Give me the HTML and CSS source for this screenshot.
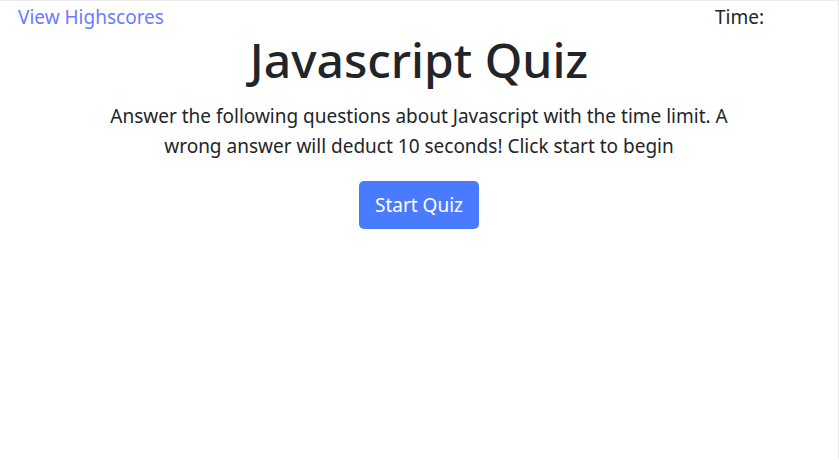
FILE: index.html
```html
<!DOCTYPE html>
<html lang="en">
<head>
<meta charset="utf-8">
<title>Javascript Quiz</title>
<link rel="stylesheet" href="styles.css">
</head>
<body>
<header class="topbar">
  <a class="highscores" href="#">View Highscores</a>
  <div class="timer">Time: <span class="time-value"></span></div>
</header>
<main class="intro">
  <h1 class="title">Javascript Quiz</h1>
  <p class="lead">Answer the following questions about Javascript with the time limit. A wrong answer will deduct 10 seconds! Click start to begin</p>
  <button class="start-btn" type="button">Start Quiz</button>
</main>
</body>
</html>
```
FILE: styles.css
```css
html, body {
  margin: 0;
  padding: 0;
}
body {
  font-family: "Noto Sans", "Open Sans", sans-serif;
  color: #212529;
  background: #fff;
  border-top: 1px solid #ececec;
  border-right: 1px solid #e6e6e6;
  min-height: 459px;
  box-sizing: border-box;
}
.topbar {
  display: flex;
  justify-content: space-between;
  align-items: baseline;
  padding: 3px 74px 0 18px;
  font-size: 19px;
  line-height: 26px;
}
.highscores {
  color: #6b7bff;
  text-decoration: none;
}
.timer {
  color: #212529;
}
.intro {
  display: flex;
  flex-direction: column;
  align-items: center;
  text-align: center;
}
.title {
  margin: 0;
  font-size: 48px;
  font-weight: 500;
  line-height: 60px;
}
.lead {
  margin: 11px 0 0;
  width: 660px;
  font-size: 19px;
  line-height: 30px;
}
.start-btn {
  margin-top: 20px;
  font-family: inherit;
  font-size: 19px;
  line-height: 28px;
  color: #fff;
  background: #4a7bff;
  border: none;
  border-radius: 5px;
  padding: 10px 16px;
}
```
